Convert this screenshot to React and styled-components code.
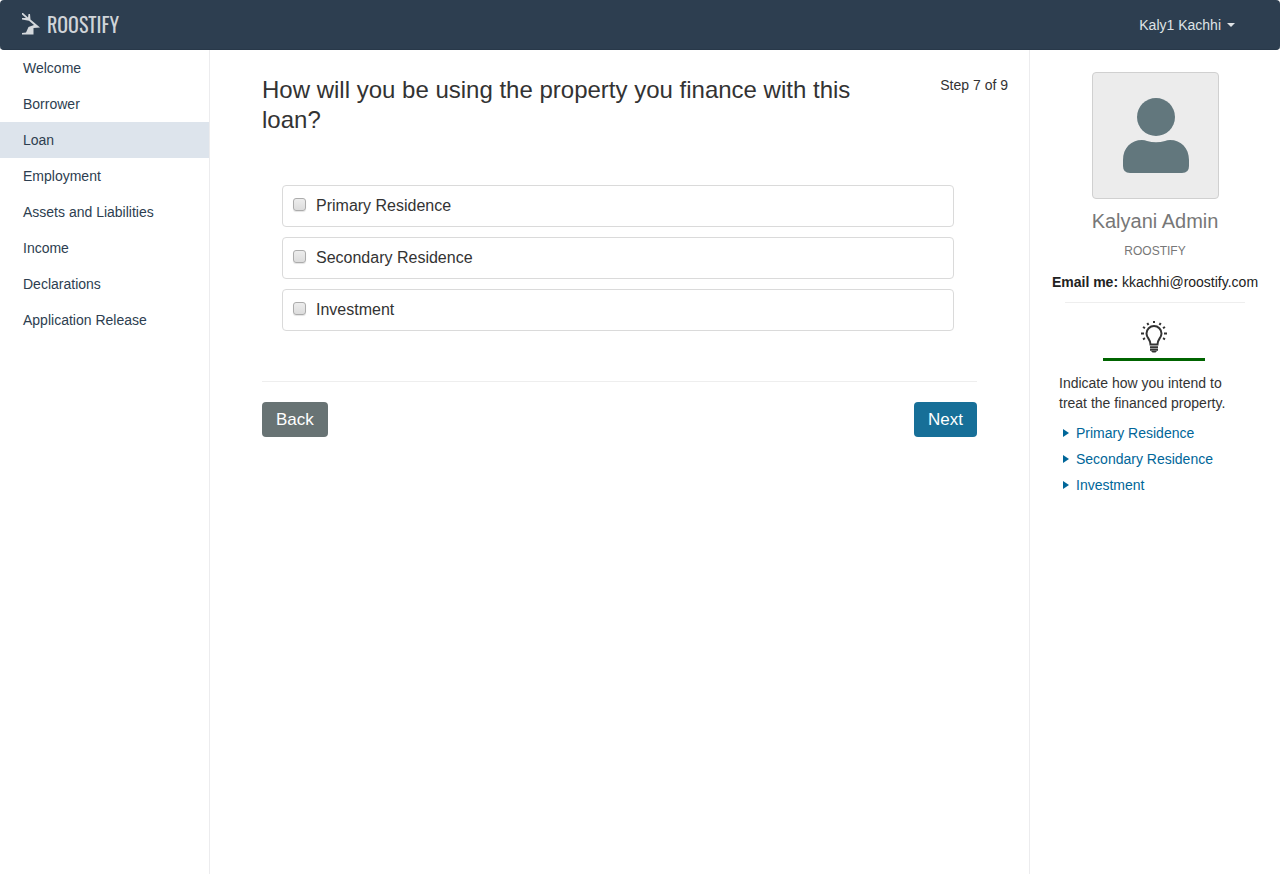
import React from 'react';
import styled, { createGlobalStyle } from 'styled-components';

const GlobalStyle = createGlobalStyle`
  *, *::before, *::after { box-sizing: border-box; }
  body {
    margin: 0;
    background: #fff;
    color: #333;
    font: 14px/20px "Liberation Sans", Arial, sans-serif;
  }
`;

const Page = styled.div`
  display: flex;
  flex-direction: column;
  min-height: 100vh;
`;

const TopBar = styled.header`
  display: flex;
  align-items: center;
  justify-content: space-between;
  height: 50px;
  padding: 0 45px 0 21px;
  background: #2d3e50;
  border-bottom: 1px solid #283849;
  border-radius: 4px;
`;

const Brand = styled.a`
  display: flex;
  align-items: center;
  gap: 7px;
  padding-bottom: 2px;
  color: #d0d4d8;
  font: 20px/24px "Oswald", "Roboto Condensed", "Open Sans Condensed", "Liberation Sans", sans-serif;
  text-decoration: none;
`;

const AccountButton = styled.button`
  display: flex;
  align-items: center;
  gap: 6px;
  padding: 0;
  border: 0;
  background: none;
  color: #dfe3e6;
  font: inherit;
  cursor: pointer;
`;

const Caret = styled.span`
  border: 4px solid transparent;
  border-top-color: currentColor;
  border-bottom: 0;
`;

const Columns = styled.div`
  display: flex;
  flex: 1;
`;

const Sidebar = styled.nav`
  flex: 0 0 210px;
  border-right: 1px solid #ececee;
`;

const NavList = styled.ul`
  margin: 0;
  padding: 0;
  list-style: none;
`;

const NavLink = styled.a`
  display: block;
  padding: 8px 23px;
  background: ${({ $active }) => ($active ? '#dde4ec' : 'transparent')};
  color: #2d3e50;
  text-decoration: none;
`;

const Main = styled.main`
  flex: 1;
  min-width: 0;
  padding: 25px 52px 0;
  border-right: 1px solid #ececee;
`;

const Heading = styled.div`
  display: flex;
  justify-content: space-between;
  align-items: flex-start;
  margin-right: -31px;
`;

const Title = styled.h1`
  flex: 0 1 610px;
  margin: 0;
  font-size: 24px;
  line-height: 30px;
  font-weight: 400;
`;

const Step = styled.span`
  white-space: nowrap;
`;

const Options = styled.fieldset`
  display: flex;
  flex-direction: column;
  gap: 10px;
  margin: 50px 23px 50px 20px;
  padding: 0;
  border: 0;
`;

const Option = styled.label`
  display: flex;
  align-items: center;
  gap: 10px;
  height: 42px;
  padding: 0 10px;
  border: 1px solid #dadada;
  border-radius: 4px;
  font-size: 16px;
`;

const Checkbox = styled.input`
  appearance: none;
  width: 13px;
  height: 13px;
  margin: 0 0 3px;
  border: 1px solid #acacac;
  border-radius: 3px;
  background: linear-gradient(#ededed, #dcdcdc);
  box-shadow: 0 1px 1px #e4e4e4;
  &:checked { background: #176f98; }
`;

const Actions = styled.div`
  display: flex;
  justify-content: space-between;
  padding-top: 20px;
  border-top: 1px solid #eee;
`;

const Button = styled.button`
  height: 35px;
  padding: 0 14px;
  border: 0;
  border-radius: 4px;
  background: ${({ $primary }) => ($primary ? '#176f98' : '#687374')};
  color: #fff;
  font: 17px/24px "Liberation Sans", Arial, sans-serif;
  cursor: pointer;
`;

const Aside = styled.aside`
  flex: 0 0 250px;
  padding: 22px 20px 0;
`;

const Profile = styled.section`
  display: flex;
  flex-direction: column;
  align-items: center;
  white-space: nowrap;
`;

const Avatar = styled.div`
  display: flex;
  justify-content: center;
  width: 127px;
  height: 127px;
  margin-left: 1px;
  padding-top: 24px;
  border: 1px solid #d0d0d0;
  border-radius: 4px;
  background: #ececec;
`;

const Name = styled.h2`
  margin: 10px 0;
  color: #777;
  font-size: 20px;
  line-height: 24px;
  font-weight: 400;
`;

const Company = styled.div`
  margin-bottom: 13px;
  color: #777;
  font-size: 12px;
  line-height: 16px;
`;

const Contact = styled.div`
  color: #222;
`;

const Rule = styled.hr`
  margin: 10px 15px 18px;
  border: 0;
  border-top: 1px solid #eee;
`;

const TipIcon = styled.div`
  display: flex;
  justify-content: center;
  width: 102px;
  height: 40px;
  margin: 0 0 12px 53px;
  border-bottom: 3px solid #006400;
`;

const Tip = styled.section`
  padding: 0 20px 0 9px;
`;

const TipText = styled.p`
  margin: 0 0 10px;
`;

const TipList = styled.ul`
  display: flex;
  flex-direction: column;
  gap: 6px;
  margin: 0;
  padding: 0 0 0 4px;
  list-style: none;
`;

const TipLink = styled.a`
  display: flex;
  align-items: center;
  gap: 7px;
  color: #006699;
  text-decoration: none;
`;

const Arrow = styled.span`
  border: 4px solid transparent;
  border-left: 6px solid currentColor;
  border-right: 0;
`;

const SECTIONS = [
  'Welcome', 'Borrower', 'Loan', 'Employment', 'Assets and Liabilities',
  'Income', 'Declarations', 'Application Release',
];
const RESIDENCES = ['Primary Residence', 'Secondary Residence', 'Investment'];

const BirdMark = () => (
  <svg width="19" height="24" viewBox="0 0 19 24" fill="#d5d9dd" aria-hidden="true">
    <path d="M1 1 L2 1 L7 5.500 L7.500 2 L9 2 L9.500 7.500 L19 15.500 L12.500 16 L12.500 22.500 L1 22.500 L1 21 L5 20.500 L7.500 15 L13 13 L8 8.800 L1 7.500 L1 6 L5 6 L1 2.500 Z" />
  </svg>
);

const Person = () => (
  <svg width="68" height="78" viewBox="0 0 68 78" fill="#62777d" aria-hidden="true">
    <circle cx="34" cy="20" r="19" />
    <path d="M1 63 C1 51 9 43 20 43 Q23 43 25 44 Q34 46.500 43 44 Q45 43 48 43 C59 43 67 51 67 63 V69 Q67 76 60 76 H8 Q1 76 1 69 Z" />
  </svg>
);

const Bulb = () => (
  <svg width="26" height="32" viewBox="0 0 26 32" fill="none" stroke="#333" strokeWidth="2" aria-hidden="true">
    <path d="M9.500 23.500 C9.500 18 5.500 17 5.500 12.500 A7.500 7.500 0 0 1 20.500 12.500 C20.500 17 16.500 18 16.500 23.500 Z" />
    <path d="M9 26.200 H17 M9 28.800 H17" />
    <path d="M10 30 H16 L14.500 31.500 H11.500 Z" fill="#333" stroke="none" />
    <path d="M13 0 V2 M6.300 2 L7.500 4 M19.700 2 L18.500 4 M2 6 L4 7.200 M24 6 L22 7.200 M0 12.500 H3 M23 12.500 H26 M2 18.300 L4 17.200 M24 18.300 L22 17.200" />
  </svg>
);

export default function App() {
  return (
    <Page>
      <GlobalStyle />
      <TopBar>
        <Brand href="#"><BirdMark />ROOSTIFY</Brand>
        <AccountButton type="button">Kaly1 Kachhi<Caret /></AccountButton>
      </TopBar>
      <Columns>
        <Sidebar>
          <NavList>
            {SECTIONS.map((name) => (
              <li key={name}><NavLink href="#" $active={name === 'Loan'}>{name}</NavLink></li>
            ))}
          </NavList>
        </Sidebar>
        <Main>
          <Heading>
            <Title id="question">How will you be using the property you finance with this loan?</Title>
            <Step>Step 7 of 9</Step>
          </Heading>
          <Options aria-labelledby="question">
            {RESIDENCES.map((name) => (
              <Option key={name}><Checkbox type="checkbox" name="residence" value={name} />{name}</Option>
            ))}
          </Options>
          <Actions>
            <Button type="button">Back</Button>
            <Button type="button" $primary>Next</Button>
          </Actions>
        </Main>
        <Aside>
          <Profile>
            <Avatar><Person /></Avatar>
            <Name>Kalyani Admin</Name>
            <Company>ROOSTIFY</Company>
            <Contact><strong>Email me:</strong> kkachhi@roostify.com</Contact>
          </Profile>
          <Rule />
          <TipIcon><Bulb /></TipIcon>
          <Tip>
            <TipText>Indicate how you intend to treat the financed property.</TipText>
            <TipList>
              {RESIDENCES.map((name) => (
                <li key={name}><TipLink href="#"><Arrow />{name}</TipLink></li>
              ))}
            </TipList>
          </Tip>
        </Aside>
      </Columns>
    </Page>
  );
}
